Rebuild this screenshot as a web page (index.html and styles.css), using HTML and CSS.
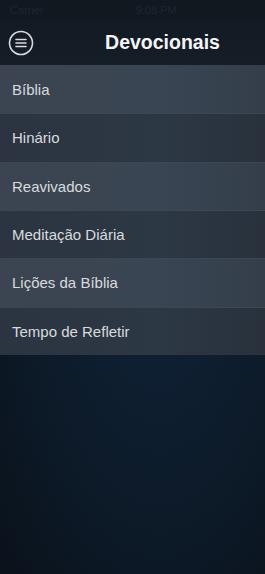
FILE: index.html
```html
<!DOCTYPE html>
<html lang="pt">
<head>
    <meta charset="UTF-8">
    <meta name="viewport" content="width=device-width, initial-scale=1.0">
    <title>Devocionais</title>
    <link rel="stylesheet" href="styles.css">
</head>
<body>
    <div class="status-bar">
        <span class="carrier">Carrier</span>
        <span class="clock">9:08 PM</span>
    </div>

    <header class="nav-bar">
        <button class="menu-button" type="button" aria-label="Menu">
            <svg width="26" height="26" viewBox="0 0 26 26">
                <circle cx="13" cy="13" r="11.5" fill="none" stroke="#d9dbde" stroke-width="1.6"/>
                <path d="M8 9.5h10M8 13h10M8 16.5h10" stroke="#d9dbde" stroke-width="1.6" stroke-linecap="round"/>
            </svg>
        </button>
        <h1 class="title">Devocionais</h1>
    </header>

    <ul class="menu">
        <li class="menu-item light">Bíblia</li>
        <li class="menu-item dark">Hinário</li>
        <li class="menu-item light">Reavivados</li>
        <li class="menu-item dark">Meditação Diária</li>
        <li class="menu-item light">Lições da Bíblia</li>
        <li class="menu-item dark">Tempo de Refletir</li>
    </ul>
</body>
</html>
```

FILE: styles.css
```css
body {
    margin: 0;
    padding: 0;
    width: 265px;
    min-height: 574px;
    font-family: 'Liberation Sans', Arial, sans-serif;
    background: radial-gradient(ellipse at 60% 40%, #10243a 0%, #0d1b2a 55%, #0a121b 100%);
    color: #e4e6e9;
    overflow: hidden;
}

.status-bar {
    height: 20px;
    display: flex;
    align-items: center;
    padding: 0 10px;
    font-size: 11px;
    color: #1d2631;
    background: #111820;
}

.clock {
    margin-left: 92px;
}

.nav-bar {
    height: 45px;
    display: flex;
    align-items: center;
    background: linear-gradient(to bottom, #121a23, #151d27);
}

.menu-button {
    width: 26px;
    height: 26px;
    margin: 0 0 0 8px;
    padding: 0;
    border: none;
    background: none;
    display: flex;
}

.title {
    flex: 1;
    margin: 0;
    padding-left: 26px;
    text-align: center;
    font-size: 19.5px;
    font-weight: bold;
    color: #f4f5f6;
}

.menu {
    list-style: none;
    margin: 0;
    padding: 0;
}

.menu-item {
    height: 47.33px;
    display: flex;
    align-items: center;
    padding-left: 12px;
    font-size: 15px;
    color: #d8dbdf;
    border-top: 1px solid #3d4754;
}

.menu-item:first-child {
    border-top: none;
    height: 48.33px;
}

.light {
    background: linear-gradient(to right, #3b4450, #3a4553 60%, #343e4b);
}

.dark {
    background: linear-gradient(to right, #2b3440, #2d3845 60%, #28313c);
}
```
